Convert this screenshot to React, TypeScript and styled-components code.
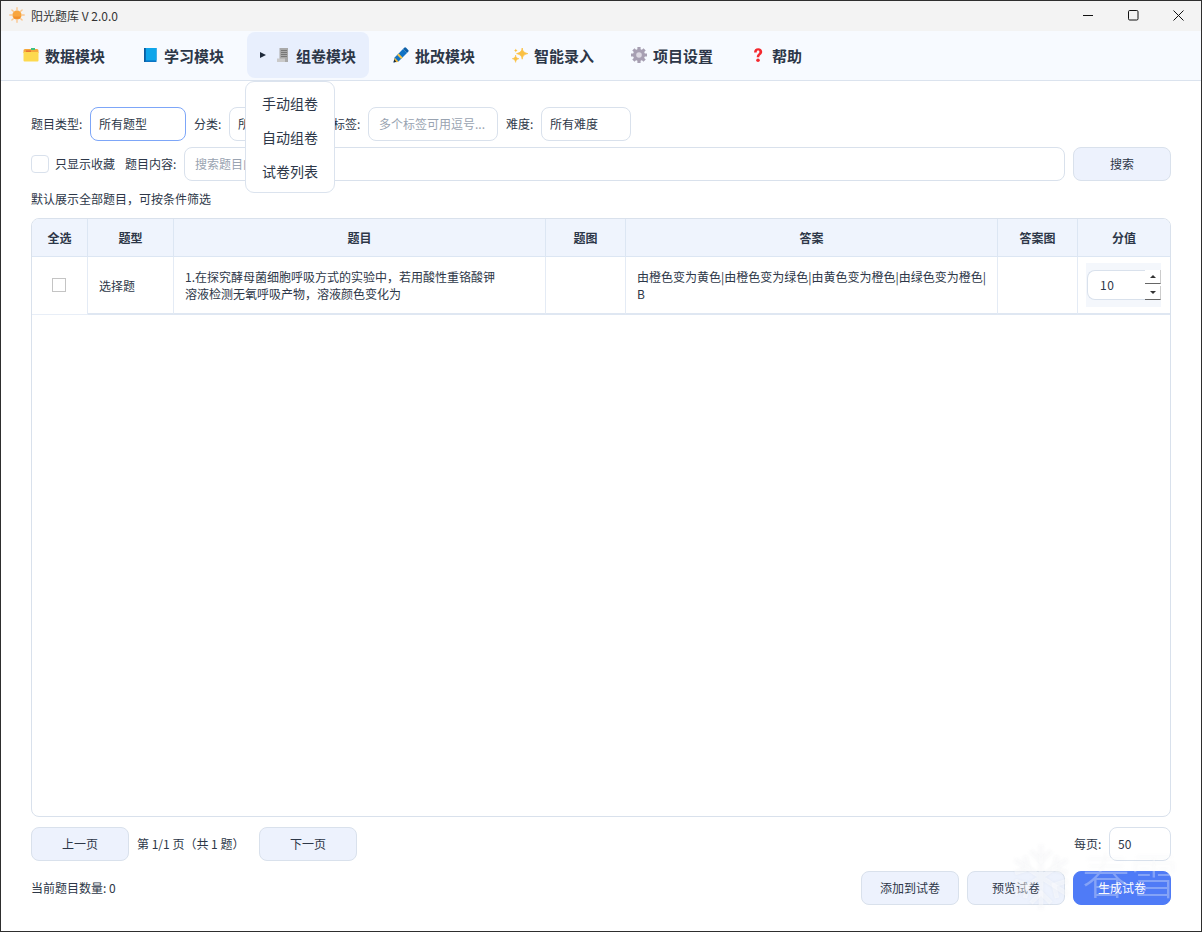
import React from "react";
import styled, { createGlobalStyle } from "styled-components";

const FONT = `"Noto Sans CJK SC", "Liberation Sans", sans-serif`;
const COMMA = "\uFF0C";
const LP = "\uFF08";
const RP = "\uFF09";

const Global = createGlobalStyle`
  html, body { margin: 0; padding: 0; background: #fff; }
  body { font-family: ${FONT}; color: #2d3748; font-size: 12px; }
  * { box-sizing: border-box; }
`;

const Win = styled.div`
  position: relative;
  width: 1202px;
  height: 932px;
  border: 1px solid #2e2e2e;
  display: flex;
  flex-direction: column;
  background: #fff;
  overflow: hidden;
`;
const TitleBar = styled.div`
  height: 30px;
  flex: none;
  display: flex;
  align-items: center;
  background: #f3f3f3;
  padding: 0 0 2px 8px;
  color: #333;
  font-size: 12px;
`;
const TitleText = styled.span`
  flex: 1;
  margin-left: 6px;
`;
const WinBtn = styled.div`
  width: 45px;
  height: 28px;
  display: flex;
  align-items: center;
  justify-content: center;
`;
const MenuBar = styled.div`
  height: 50px;
  flex: none;
  display: flex;
  align-items: center;
  gap: 12px;
  padding: 0 0 1px 10px;
  background: #f7faff;
  border-bottom: 1px solid #dbe3ee;
`;
const MenuItem = styled.div<{ $active?: boolean }>`
  height: 46px;
  display: flex;
  align-items: center;
  padding: 0 13px 0 ${(p) => (p.$active ? "13px" : "12px")};
  gap: ${(p) => (p.$active ? "5px" : "6px")};
  font-size: 15px;
  font-weight: 700;
  color: #2d3748;
  border-radius: 8px;
  background: ${(p) => (p.$active ? "#e8effd" : "transparent")};
  margin-left: ${(p) => (p.$active ? "-2px" : "0")};
`;
const Arrow = styled.span`
  width: 0;
  height: 0;
  border-left: 6px solid #1f2a3a;
  border-top: 3.5px solid transparent;
  border-bottom: 3.5px solid transparent;
  margin-right: 4px;
`;
const Popup = styled.div`
  position: absolute;
  left: 244px;
  top: 80px;
  width: 90px;
  height: 112px;
  background: #fff;
  border: 1px solid #dbe3ee;
  border-radius: 9px;
  display: flex;
  flex-direction: column;
  padding: 4px 0;
  z-index: 5;
`;
const PopupItem = styled.div`
  flex: 1;
  display: flex;
  align-items: center;
  justify-content: center;
  font-size: 14px;
  color: #2d3748;
`;
const Main = styled.div`
  flex: 1;
  display: flex;
  flex-direction: column;
  padding: 26px 30px;
  min-height: 0;
`;
const FilterRow = styled.div`
  display: flex;
  align-items: center;
  height: 34px;
  margin-bottom: 6px;
`;
const Label = styled.span<{ $w: number; $ml?: number }>`
  width: ${(p) => p.$w}px;
  margin-left: ${(p) => p.$ml ?? 0}px;
  flex: none;
  padding-bottom: 2px;
  font-size: 12px;
  white-space: nowrap;
  color: #2d3748;
`;
const Field = styled.div<{ $w?: number; $focus?: boolean; $ph?: boolean }>`
  width: ${(p) => (p.$w ? `${p.$w}px` : "auto")};
  flex: ${(p) => (p.$w ? "none" : "1")};
  height: 34px;
  display: flex;
  align-items: center;
  padding: 0 ${(p) => (p.$ph ? "10px" : "8px")} 2px;
  border: 1px solid ${(p) => (p.$focus ? "#7da6f8" : "#d9e1ec")};
  border-radius: 8px;
  background: #fff;
  font-size: 12px;
  color: ${(p) => (p.$ph ? "#99a3b1" : "#2d3748")};
  white-space: nowrap;
  overflow: hidden;
`;
const Check = styled.span`
  width: 18px;
  height: 18px;
  flex: none;
  border: 1px solid #d9e1ec;
  border-radius: 4px;
  background: #fff;
  margin-right: 6px;
`;
const Btn = styled.div<{ $primary?: boolean }>`
  width: 98px;
  height: 34px;
  flex: none;
  display: flex;
  align-items: center;
  justify-content: center;
  padding-bottom: 1px;
  border: 1px solid ${(p) => (p.$primary ? "#4f7bf7" : "#d9e1ec")};
  border-radius: 8px;
  background: ${(p) => (p.$primary ? "#4f7bf7" : "#edf2fd")};
  color: ${(p) => (p.$primary ? "#fff" : "#2d3748")};
  font-size: 12px;
`;
const Hint = styled.div`
  height: 18px;
  line-height: 18px;
  margin-top: 3px;
  margin-bottom: 10px;
  font-size: 12px;
`;
const Table = styled.div`
  height: 599px;
  flex: none;
  border: 1px solid #d9e1ec;
  border-radius: 8px;
  overflow: hidden;
  background: #fff;
`;
const COLS = "56px 86px 372px 80px 372px 80px 1fr";
const Head = styled.div`
  display: grid;
  grid-template-columns: ${COLS};
  height: 38px;
  background: #eff4fd;
  border-bottom: 1px solid #dce6f3;
`;
const HeadCell = styled.div`
  display: flex;
  align-items: center;
  justify-content: center;
  font-size: 12px;
  font-weight: 700;
  color: #2d3748;
  border-right: 1px solid #dce6f3;
  &:last-child { border-right: 0; }
`;
const Row = styled.div`
  display: grid;
  grid-template-columns: ${COLS};
  height: 58px;
`;
const Cell = styled.div<{ $center?: boolean; $first?: boolean; $flush?: boolean }>`
  display: flex;
  align-items: center;
  justify-content: ${(p) => (p.$center ? "center" : "flex-start")};
  padding: ${(p) => (p.$center || p.$flush ? "0" : "0 11px")};
  font-size: 12px;
  line-height: 17px;
  color: #2d3748;
  border-right: 1px solid #e4ebf5;
  border-bottom: ${(p) => (p.$first ? "1px solid #e8eef7" : "2px solid #dfe7f2")};
  &:last-child { border-right: 0; }
`;
const RowCheck = styled.span`
  width: 14px;
  height: 14px;
  margin: -1px 0 0 -1px;
  border: 1px solid #c4c4c4;
  background: #fff;
`;
const SpinWrap = styled.div`
  width: 75px;
  height: 44px;
  margin-left: 8px;
  background: #f4f7fc;
  padding: 7px 0 0 1px;
  display: flex;
`;
const Spin = styled.div`
  width: 58px;
  height: 30px;
  border: 1px solid #d9e1ec;
  border-right: 0;
  border-radius: 8px 0 0 8px;
  background: #fff;
  display: flex;
  align-items: center;
  padding: 0 0 1px 12px;
  font-size: 12px;
  letter-spacing: 0.6px;
`;
const SpinBtns = styled.div`
  width: 16px;
  height: 30px;
  background: #fff;
  display: flex;
  flex-direction: column;
  justify-content: space-between;
`;
const SpinBtn = styled.span<{ $down?: boolean }>`
  width: 16px;
  height: 14px;
  display: flex;
  align-items: center;
  justify-content: center;
  border-bottom: 1px solid #666;
  border-right: 1px solid #ccc;
  &::before {
    content: "";
    width: 0;
    height: 0;
    border-left: 3px solid transparent;
    border-right: 3px solid transparent;
    ${(p) => (p.$down ? "border-top: 3px solid #333;" : "border-bottom: 3px solid #333;")}
  }
`;
const Pager = styled.div`
  height: 34px;
  margin-top: 10px;
  display: flex;
  align-items: center;
`;
const PageInfo = styled.span`
  width: 130px;
  padding: 0 0 2px 8px;
  flex: none;
  font-size: 12px;
  white-space: nowrap;
`;
const Spacer = styled.div`
  flex: 1;
`;
const SearchGap = styled.div`
  width: 8px;
  flex: none;
`;
const Footer = styled.div`
  height: 34px;
  margin-top: 10px;
  display: flex;
  align-items: center;
  gap: 8px;
`;
const Count = styled.span`
  padding-bottom: 2px;
`;
const Watermark = styled.div`
  position: absolute;
  left: 1011px;
  top: 842px;
  width: 172px;
  height: 68px;
  display: flex;
  align-items: center;
  gap: 12px;
  pointer-events: none;
  z-index: 6;
  filter: drop-shadow(0 0 1.5px rgba(140, 150, 170, 0.22));
`;
const WmText = styled.span`
  font-size: 48px;
  line-height: 1;
  font-weight: 300;
  white-space: nowrap;
  margin-top: -8px;
  color: rgba(255, 255, 255, 0.3);
`;

const Sun = () => (
  <svg width="16" height="16" viewBox="0 0 16 16">
    <g stroke="#fbc68e" strokeWidth="1.4" strokeLinecap="round">
      <path d="M8 .8v2M8 13.2v2M.8 8h2M13.2 8h2M2.9 2.9l1.4 1.4M11.7 11.7l1.4 1.4M2.9 13.1l1.4-1.4M11.7 4.3l1.4-1.4" />
    </g>
    <circle cx="8" cy="8" r="4.6" fill="#f8a63f" />
    <path d="M3.9 9.6h8.2A4.6 4.6 0 0 1 3.9 9.6z" fill="#f28f2c" />
  </svg>
);
const Folder = () => (
  <svg width="16" height="16" viewBox="0 0 16 16">
    <path d="M.5 3.5A1.5 1.5 0 0 1 2 2h12a1.5 1.5 0 0 1 1.5 1.5V6H.5z" fill="#f5a83c" />
    <rect x="8" y="1" width="4" height="2" fill="#3fbf7f" />
    <rect x="3" y="3.6" width="5" height="1" fill="#e0552f" />
    <path d="M.5 5h15v8.5a1 1 0 0 1-1 1h-13a1 1 0 0 1-1-1z" fill="#fdd94f" />
  </svg>
);
const Book = () => (
  <svg width="16" height="16" viewBox="0 0 16 16">
    <rect x="2" y="1" width="12.5" height="14" fill="#0b74c4" />
    <rect x="4" y="1" width="10.5" height="12.4" fill="#0ea5ea" />
    <rect x="2" y="1" width="1.4" height="14" fill="#0a5d9f" />
  </svg>
);
const Doc = () => (
  <svg width="16" height="16" viewBox="0 0 16 16">
    <path d="M4.5 1H13v14H2v-3h2.5z" fill="#a9a9a9" />
    <path d="M2 11.5h8V15H2z" fill="#c9c9c9" />
    <path d="M6 3.5h6M6 5.5h6M6 7.5h6M6 9.5h6" stroke="#777" strokeWidth="1" />
  </svg>
);
const Pen = () => (
  <svg width="16" height="16" viewBox="0 0 16 16">
    <path d="M.5 15.5l1.1-5L10 2l4 4-8.5 8.4z" fill="#1273c4" />
    <path d="M1.6 10.5l3.9 3.9-1.8.8-2.4-.4z" fill="#f4b93c" />
    <path d="M5.6 6.4l4 4-1.5 1.5-4-4z" fill="#f8c444" />
    <path d="M10 2l1.2-1.2a1.3 1.3 0 0 1 1.9 0l2.1 2.1a1.3 1.3 0 0 1 0 1.9L14 6z" fill="#0d5fa8" />
    <path d="M.5 15.5l.7-2.9 2.2 2.2z" fill="#1f2937" />
  </svg>
);
const Sparkle = () => (
  <svg width="16" height="16" viewBox="0 0 16 16" fill="#fbc042">
    <path d="M10.2 1c.4 3.2 1.7 4.6 5.6 5.6-3.9 1-5.2 2.4-5.6 5.6-.4-3.2-1.7-4.6-5.6-5.6 3.9-1 5.2-2.4 5.6-5.6z" stroke="#fbc042" strokeWidth=".8" />
    <path d="M3.6 8c.3 2.2 1.1 3.1 3.4 3.7-2.3.6-3.1 1.5-3.4 3.7-.3-2.2-1.1-3.1-3.4-3.7 2.3-.6 3.1-1.5 3.4-3.7z" stroke="#fbc042" strokeWidth=".5" />
    <path d="M3.8 1.6c.2 1.2.7 1.7 1.9 2-1.2.3-1.7.8-1.9 2-.2-1.2-.7-1.7-1.9-2 1.2-.3 1.7-.8 1.9-2z" />
  </svg>
);
const Gear = () => (
  <svg width="16" height="16" viewBox="0 0 16 16">
    <g stroke="#a79fb2" strokeWidth="3.2">
      <path d="M8 0v16M0 8h16M2.4 2.4l11.2 11.2M13.6 2.4L2.4 13.6" />
    </g>
    <circle cx="8" cy="8" r="6" fill="#a79fb2" />
    <circle cx="8" cy="8" r="2.8" fill="#dcd8e2" />
  </svg>
);
const Question = () => (
  <svg width="16" height="16" viewBox="0 0 16 16">
    <path d="M4 5.4C4 2.8 5.7 1.2 8.2 1.2s4 1.5 4 3.6c0 3-2.9 3-2.9 5.4H6.8c0-3.6 2.6-3.5 2.6-5.3 0-.8-.5-1.3-1.3-1.3-.9 0-1.4.6-1.4 1.8z" fill="#f4292f" />
    <circle cx="8" cy="13.2" r="1.8" fill="#f4292f" />
  </svg>
);
const Flake = () => (
  <svg width="58" height="68" viewBox="0 0 58 68" fill="none" stroke="rgba(255,255,255,0.42)" strokeWidth="4.5">
    <path d="M29 2v64M3 17l52 34M55 17L3 51" />
    <path d="M19 8l10 10 10-10M19 60l10-10 10 10M3 30l13-4-3-13M55 30l-13-4 3-13M3 38l13 4-3 13M55 38l-13 4 3 13" />
  </svg>
);

const menus = [
  { icon: <Folder />, label: "数据模块" },
  { icon: <Book />, label: "学习模块" },
  { icon: <Doc />, label: "组卷模块", active: true },
  { icon: <Pen />, label: "批改模块" },
  { icon: <Sparkle />, label: "智能录入" },
  { icon: <Gear />, label: "项目设置" },
  { icon: <Question />, label: "帮助" },
];

export default function App() {
  return (
    <Win>
      <Global />
      <TitleBar>
        <Sun />
        <TitleText>阳光题库 V 2.0.0</TitleText>
        <WinBtn>
          <svg width="11" height="11" viewBox="0 0 11 11"><path d="M0 5.5h10" stroke="#111" /></svg>
        </WinBtn>
        <WinBtn>
          <svg width="11" height="11" viewBox="0 0 11 11"><rect x=".5" y=".5" width="9.5" height="9.5" rx="1.2" fill="none" stroke="#111" /></svg>
        </WinBtn>
        <WinBtn>
          <svg width="11" height="11" viewBox="0 0 11 11"><path d="M.5.5l10 10M10.5.5l-10 10" stroke="#111" /></svg>
        </WinBtn>
      </TitleBar>
      <MenuBar>
        {menus.map((m) => (
          <MenuItem key={m.label} $active={m.active}>
            {m.active && <Arrow />}
            {m.icon}
            <span>{m.label}</span>
          </MenuItem>
        ))}
      </MenuBar>
      <Popup>
        <PopupItem>手动组卷</PopupItem>
        <PopupItem>自动组卷</PopupItem>
        <PopupItem>试卷列表</PopupItem>
      </Popup>
      <Main>
        <FilterRow>
          <Label $w={59}>题目类型:</Label>
          <Field $w={96} $focus>所有题型</Field>
          <Label $w={35} $ml={8}>分类:</Label>
          <Field $w={96}>所有分类</Field>
          <Label $w={35} $ml={8}>标签:</Label>
          <Field $w={130} $ph>多个标签可用逗号...</Field>
          <Label $w={35} $ml={8}>难度:</Label>
          <Field $w={90}>所有难度</Field>
        </FilterRow>
        <FilterRow>
          <Check />
          <Label $w={70}>只显示收藏</Label>
          <Label $w={59}>题目内容:</Label>
          <Field $ph>搜索题目内容</Field>
          <SearchGap />
          <Btn>搜索</Btn>
        </FilterRow>
        <Hint>{`默认展示全部题目${COMMA}可按条件筛选`}</Hint>
        <Table>
          <Head>
            {["全选", "题型", "题目", "题图", "答案", "答案图", "分值"].map((h) => (
              <HeadCell key={h}>{h}</HeadCell>
            ))}
          </Head>
          <Row>
            <Cell $center $first><RowCheck /></Cell>
            <Cell>选择题</Cell>
            <Cell>
              <span>
                {`1.在探究酵母菌细胞呼吸方式的实验中${COMMA}若用酸性重铬酸钾`}
                <br />
                {`溶液检测无氧呼吸产物${COMMA}溶液颜色变化为`}
              </span>
            </Cell>
            <Cell />
            <Cell><span>由橙色变为黄色|由橙色变为绿色|由黄色变为橙色|由绿色变为橙色|<br />B</span></Cell>
            <Cell />
            <Cell $flush>
              <SpinWrap>
                <Spin>10</Spin>
                <SpinBtns>
                  <SpinBtn />
                  <SpinBtn $down />
                </SpinBtns>
              </SpinWrap>
            </Cell>
          </Row>
        </Table>
        <Pager>
          <Btn>上一页</Btn>
          <PageInfo>{`第 1/1 页${LP}共 1 题${RP}`}</PageInfo>
          <Btn>下一页</Btn>
          <Spacer />
          <Label $w={35}>每页:</Label>
          <Field $w={62}>50</Field>
        </Pager>
        <Footer>
          <Count>当前题目数量: 0</Count>
          <Spacer />
          <Btn>添加到试卷</Btn>
          <Btn>预览试卷</Btn>
          <Btn $primary>生成试卷</Btn>
        </Footer>
      </Main>
      <Watermark>
        <Flake />
        <WmText>春雪</WmText>
      </Watermark>
    </Win>
  );
}
